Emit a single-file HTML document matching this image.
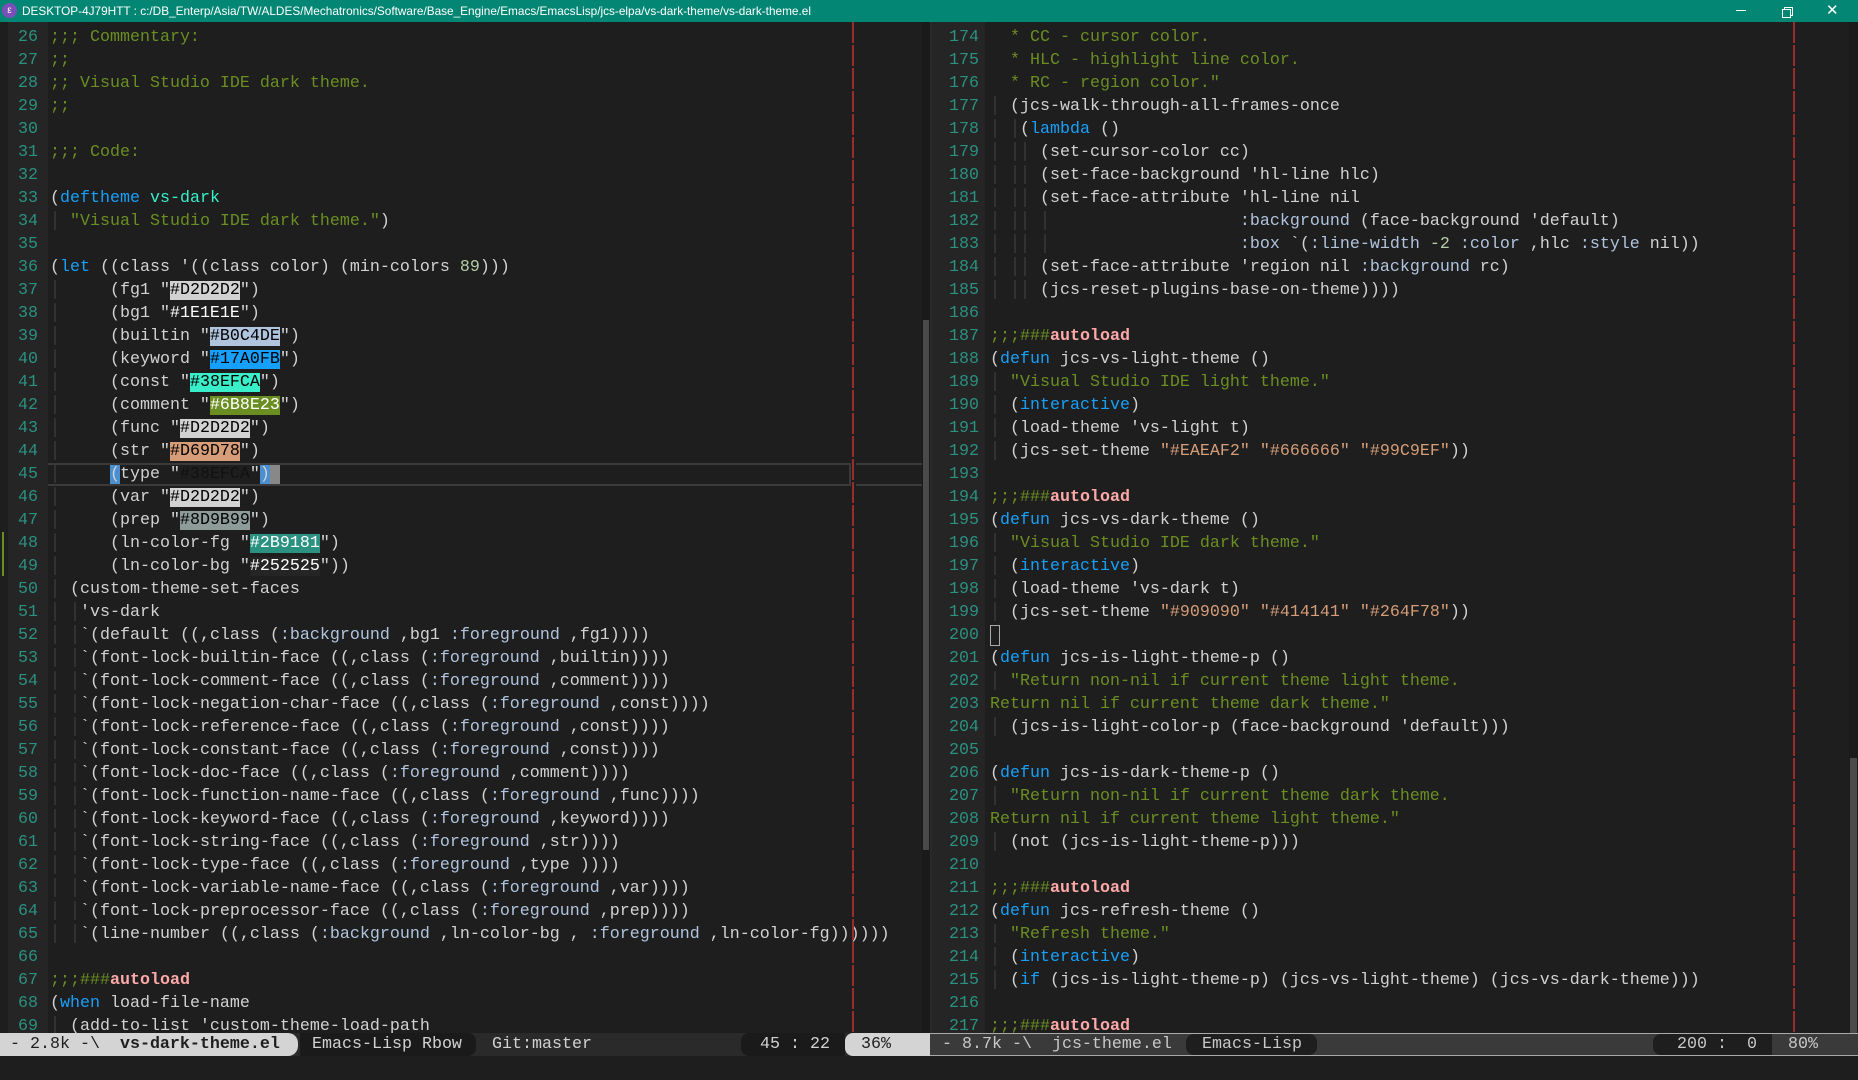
<!DOCTYPE html>
<html><head><meta charset="utf-8">
<style>
*{margin:0;padding:0;box-sizing:border-box}
html,body{width:1858px;height:1080px;overflow:hidden;background:#1e1e1e}
body{position:relative;font-family:"Liberation Mono","DejaVu Sans Mono",monospace;font-size:16.667px;color:#d2d2d2}
#title{position:absolute;left:0;top:0;width:1858px;height:22px;background:#038774;color:#fff;font-family:"Liberation Sans",sans-serif;font-size:11.8px;line-height:22px;padding-left:22px;white-space:nowrap}
#icon{position:absolute;left:2px;top:3px;width:15px;height:15px;border-radius:50%;background:#7b4fb8;color:#fff;font-size:10px;line-height:15px;text-align:center}
.wb{position:absolute;top:0;height:22px;color:#fff}
.pane{position:absolute;top:26px;overflow:hidden;height:1007px}
.l{height:23px;line-height:23px;white-space:pre}
.gut{position:absolute;top:22px;height:1011px;background:#252525}
.num{color:#2b9181;text-align:right}
.c{color:#6b8e23}.k{color:#17a0fb}.s{color:#d69d78}.b{color:#b0c4de}.n{color:#b5cea8}.f{color:#38efca}
.a{color:#ffa8a8;font-weight:bold}.g{color:#404040}
.fill{position:absolute;top:22px;width:2px;height:1011px;background:repeating-linear-gradient(#9a2c2c 0 21px,transparent 21px 23px)}
.sb{position:absolute;top:22px;height:1011px;background:#1a1a1a}
.th{position:absolute;background:#4a4a4a}
.ml{position:absolute;top:1033px;height:23px;line-height:23px;white-space:pre;font-size:16.667px}
.seg{position:absolute;top:0;height:23px;padding-left:0}
</style></head><body>
<div id="title"><div id="icon">ε</div>DESKTOP-4J79HTT : c:/DB_Enterp/Asia/TW/ALDES/Mechatronics/Software/Base_Engine/Emacs/EmacsLisp/jcs-elpa/vs-dark-theme/vs-dark-theme.el
<div class="wb" style="left:1736px;top:10px;width:10px;height:1px;background:#fff"></div>
<div class="wb" style="left:1784px;top:7px;width:9px;height:9px;border:1px solid #fff"></div>
<div class="wb" style="left:1782px;top:9px;width:9px;height:9px;border:1px solid #fff;background:#038774"></div>
<div class="wb" style="left:1826px;top:0;line-height:22px;font-size:15px">✕</div>
</div>

<div class="gut" style="left:8px;width:40px"></div>
<div style="position:absolute;left:2px;top:532px;width:2px;height:44px;background:#6b8e23"></div>
<div class="pane" style="left:8px;width:30px">
<div class="num">
<div class="l">26</div><div class="l">27</div><div class="l">28</div><div class="l">29</div><div class="l">30</div><div class="l">31</div><div class="l">32</div><div class="l">33</div><div class="l">34</div><div class="l">35</div><div class="l">36</div><div class="l">37</div><div class="l">38</div><div class="l">39</div><div class="l">40</div><div class="l">41</div><div class="l">42</div><div class="l">43</div><div class="l">44</div><div class="l">45</div><div class="l">46</div><div class="l">47</div><div class="l">48</div><div class="l">49</div><div class="l">50</div><div class="l">51</div><div class="l">52</div><div class="l">53</div><div class="l">54</div><div class="l">55</div><div class="l">56</div><div class="l">57</div><div class="l">58</div><div class="l">59</div><div class="l">60</div><div class="l">61</div><div class="l">62</div><div class="l">63</div><div class="l">64</div><div class="l">65</div><div class="l">66</div><div class="l">67</div><div class="l">68</div><div class="l">69</div>
</div></div>

<div style="position:absolute;left:48px;top:463px;width:803px;height:23px;border:2px solid #3a3a3a;border-left:none"></div>
<div style="position:absolute;left:856px;top:463px;width:66px;height:23px;border:2px solid #3a3a3a;border-left:none;border-right:none"></div>
<div style="position:absolute;left:110px;top:465px;width:10px;height:19px;background:#4a8fd0"></div>
<div style="position:absolute;left:260px;top:465px;width:10px;height:19px;background:#4a8fd0"></div>
<div style="position:absolute;left:270px;top:465px;width:10px;height:19px;background:#888"></div>

<div class="pane" style="left:50px;width:872px">
<div class="l c">;;; Commentary:</div>
<div class="l c">;;</div>
<div class="l c">;; Visual Studio IDE dark theme.</div>
<div class="l c">;;</div>
<div class="l"> </div>
<div class="l c">;;; Code:</div>
<div class="l"> </div>
<div class="l">(<span class="k">deftheme</span> <span class="f">vs-dark</span></div>
<div class="l"><span class="g">│</span> <span class="c">"Visual Studio IDE dark theme."</span>)</div>
<div class="l"> </div>
<div class="l">(<span class="k">let</span> ((class '((class color) (min-colors <span class="n">89</span>)))</div>
<div class="l"><span class="g">│</span>     (fg1 "<span style="background:#d2d2d2;color:#000">#D2D2D2</span>")</div>
<div class="l"><span class="g">│</span>     (bg1 "<span style="background:#1e1e1e;color:#fff">#1E1E1E</span>")</div>
<div class="l"><span class="g">│</span>     (builtin "<span style="background:#b0c4de;color:#000">#B0C4DE</span>")</div>
<div class="l"><span class="g">│</span>     (keyword "<span style="background:#17a0fb;color:#000">#17A0FB</span>")</div>
<div class="l"><span class="g">│</span>     (const "<span style="background:#38efca;color:#000">#38EFCA</span>")</div>
<div class="l"><span class="g">│</span>     (comment "<span style="background:#6b8e23;color:#fff">#6B8E23</span>")</div>
<div class="l"><span class="g">│</span>     (func "<span style="background:#d2d2d2;color:#000">#D2D2D2</span>")</div>
<div class="l"><span class="g">│</span>     (str "<span style="background:#d69d78;color:#000">#D69D78</span>")</div>
<div class="l"><span class="g">│</span>     (type "<span style="color:#111">#38EFCA</span>")</div>
<div class="l"><span class="g">│</span>     (var "<span style="background:#d2d2d2;color:#000">#D2D2D2</span>")</div>
<div class="l"><span class="g">│</span>     (prep "<span style="background:#8d9b99;color:#000">#8D9B99</span>")</div>
<div class="l"><span class="g">│</span>     (ln-color-fg "<span style="background:#2b9181;color:#fff">#2B9181</span>")</div>
<div class="l"><span class="g">│</span>     (ln-color-bg "<span style="background:#252525;color:#fff">#252525</span>"))</div>
<div class="l"><span class="g">│</span> (custom-theme-set-faces</div>
<div class="l"><span class="g">│</span> <span class="g">│</span>'vs-dark</div>
<div class="l"><span class="g">│</span> <span class="g">│</span>`(default ((,class (<span class="b">:background</span> ,bg1 <span class="b">:foreground</span> ,fg1))))</div>
<div class="l"><span class="g">│</span> <span class="g">│</span>`(font-lock-builtin-face ((,class (<span class="b">:foreground</span> ,builtin))))</div>
<div class="l"><span class="g">│</span> <span class="g">│</span>`(font-lock-comment-face ((,class (<span class="b">:foreground</span> ,comment))))</div>
<div class="l"><span class="g">│</span> <span class="g">│</span>`(font-lock-negation-char-face ((,class (<span class="b">:foreground</span> ,const))))</div>
<div class="l"><span class="g">│</span> <span class="g">│</span>`(font-lock-reference-face ((,class (<span class="b">:foreground</span> ,const))))</div>
<div class="l"><span class="g">│</span> <span class="g">│</span>`(font-lock-constant-face ((,class (<span class="b">:foreground</span> ,const))))</div>
<div class="l"><span class="g">│</span> <span class="g">│</span>`(font-lock-doc-face ((,class (<span class="b">:foreground</span> ,comment))))</div>
<div class="l"><span class="g">│</span> <span class="g">│</span>`(font-lock-function-name-face ((,class (<span class="b">:foreground</span> ,func))))</div>
<div class="l"><span class="g">│</span> <span class="g">│</span>`(font-lock-keyword-face ((,class (<span class="b">:foreground</span> ,keyword))))</div>
<div class="l"><span class="g">│</span> <span class="g">│</span>`(font-lock-string-face ((,class (<span class="b">:foreground</span> ,str))))</div>
<div class="l"><span class="g">│</span> <span class="g">│</span>`(font-lock-type-face ((,class (<span class="b">:foreground</span> ,type ))))</div>
<div class="l"><span class="g">│</span> <span class="g">│</span>`(font-lock-variable-name-face ((,class (<span class="b">:foreground</span> ,var))))</div>
<div class="l"><span class="g">│</span> <span class="g">│</span>`(font-lock-preprocessor-face ((,class (<span class="b">:foreground</span> ,prep))))</div>
<div class="l"><span class="g">│</span> <span class="g">│</span>`(line-number ((,class (<span class="b">:background</span> ,ln-color-bg , <span class="b">:foreground</span> ,ln-color-fg))))))</div>
<div class="l"> </div>
<div class="l"><span class="c">;;;###</span><span class="a">autoload</span></div>
<div class="l">(<span class="k">when</span> load-file-name</div>
<div class="l"><span class="g">│</span> (add-to-list 'custom-theme-load-path</div>
</div>
<div class="fill" style="left:852px"></div>
<div class="sb" style="left:922px;width:8px"><div class="th" style="left:1px;top:298px;width:6px;height:530px"></div></div>

<div class="gut" style="left:932px;width:53px"></div>
<div class="pane" style="left:932px;width:47px">
<div class="num">
<div class="l">174</div><div class="l">175</div><div class="l">176</div><div class="l">177</div><div class="l">178</div><div class="l">179</div><div class="l">180</div><div class="l">181</div><div class="l">182</div><div class="l">183</div><div class="l">184</div><div class="l">185</div><div class="l">186</div><div class="l">187</div><div class="l">188</div><div class="l">189</div><div class="l">190</div><div class="l">191</div><div class="l">192</div><div class="l">193</div><div class="l">194</div><div class="l">195</div><div class="l">196</div><div class="l">197</div><div class="l">198</div><div class="l">199</div><div class="l">200</div><div class="l">201</div><div class="l">202</div><div class="l">203</div><div class="l">204</div><div class="l">205</div><div class="l">206</div><div class="l">207</div><div class="l">208</div><div class="l">209</div><div class="l">210</div><div class="l">211</div><div class="l">212</div><div class="l">213</div><div class="l">214</div><div class="l">215</div><div class="l">216</div><div class="l">217</div>
</div></div>
<div style="position:absolute;left:990px;top:625px;width:10px;height:21px;border:1px solid #aaa"></div>
<div class="pane" style="left:990px;width:859px">
<div class="l c">  * CC - cursor color.</div>
<div class="l c">  * HLC - highlight line color.</div>
<div class="l c">  * RC - region color."</div>
<div class="l"><span class="g">│</span> (jcs-walk-through-all-frames-once</div>
<div class="l"><span class="g">│</span> <span class="g">│</span>(<span class="k">lambda</span> ()</div>
<div class="l"><span class="g">│</span> <span class="g">││</span> (set-cursor-color cc)</div>
<div class="l"><span class="g">│</span> <span class="g">││</span> (set-face-background 'hl-line hlc)</div>
<div class="l"><span class="g">│</span> <span class="g">││</span> (set-face-attribute 'hl-line nil</div>
<div class="l"><span class="g">│</span> <span class="g">││</span> <span class="g">│</span>                   <span class="b">:background</span> (face-background 'default)</div>
<div class="l"><span class="g">│</span> <span class="g">││</span> <span class="g">│</span>                   <span class="b">:box</span> `(<span class="b">:line-width</span> <span class="n">-2</span> <span class="b">:color</span> ,hlc <span class="b">:style</span> nil))</div>
<div class="l"><span class="g">│</span> <span class="g">││</span> (set-face-attribute 'region nil <span class="b">:background</span> rc)</div>
<div class="l"><span class="g">│</span> <span class="g">││</span> (jcs-reset-plugins-base-on-theme))))</div>
<div class="l"> </div>
<div class="l"><span class="c">;;;###</span><span class="a">autoload</span></div>
<div class="l">(<span class="k">defun</span> jcs-vs-light-theme ()</div>
<div class="l"><span class="g">│</span> <span class="c">"Visual Studio IDE light theme."</span></div>
<div class="l"><span class="g">│</span> (<span class="k">interactive</span>)</div>
<div class="l"><span class="g">│</span> (load-theme 'vs-light t)</div>
<div class="l"><span class="g">│</span> (jcs-set-theme <span class="s">"#EAEAF2"</span> <span class="s">"#666666"</span> <span class="s">"#99C9EF"</span>))</div>
<div class="l"> </div>
<div class="l"><span class="c">;;;###</span><span class="a">autoload</span></div>
<div class="l">(<span class="k">defun</span> jcs-vs-dark-theme ()</div>
<div class="l"><span class="g">│</span> <span class="c">"Visual Studio IDE dark theme."</span></div>
<div class="l"><span class="g">│</span> (<span class="k">interactive</span>)</div>
<div class="l"><span class="g">│</span> (load-theme 'vs-dark t)</div>
<div class="l"><span class="g">│</span> (jcs-set-theme <span class="s">"#909090"</span> <span class="s">"#414141"</span> <span class="s">"#264F78"</span>))</div>
<div class="l"> </div>
<div class="l">(<span class="k">defun</span> jcs-is-light-theme-p ()</div>
<div class="l"><span class="g">│</span> <span class="c">"Return non-nil if current theme light theme.</span></div>
<div class="l c">Return nil if current theme dark theme."</div>
<div class="l"><span class="g">│</span> (jcs-is-light-color-p (face-background 'default)))</div>
<div class="l"> </div>
<div class="l">(<span class="k">defun</span> jcs-is-dark-theme-p ()</div>
<div class="l"><span class="g">│</span> <span class="c">"Return non-nil if current theme dark theme.</span></div>
<div class="l c">Return nil if current theme light theme."</div>
<div class="l"><span class="g">│</span> (not (jcs-is-light-theme-p)))</div>
<div class="l"> </div>
<div class="l"><span class="c">;;;###</span><span class="a">autoload</span></div>
<div class="l">(<span class="k">defun</span> jcs-refresh-theme ()</div>
<div class="l"><span class="g">│</span> <span class="c">"Refresh theme."</span></div>
<div class="l"><span class="g">│</span> (<span class="k">interactive</span>)</div>
<div class="l"><span class="g">│</span> (<span class="k">if</span> (jcs-is-light-theme-p) (jcs-vs-light-theme) (jcs-vs-dark-theme)))</div>
<div class="l"> </div>
<div class="l"><span class="c">;;;###</span><span class="a">autoload</span></div>
</div>
<div class="fill" style="left:1793px"></div>
<div style="position:absolute;left:930px;top:22px;width:2px;height:1011px;background:#2a2a2a"></div>
<div class="sb" style="left:1849px;width:9px"><div class="th" style="left:1px;top:736px;width:7px;height:275px"></div></div>

<div class="ml" style="left:0;width:930px;background:#2a2a2a">
<div class="seg" style="left:0;width:298px;background:#d4d4d4;color:#1e1e1e;border-radius:0 10px 10px 0"> - 2.8k -\  <b>vs-dark-theme.el</b></div>
<div class="seg" style="left:300px;width:176px;background:#1a1a1a;color:#d2d2d2;padding-left:12px;border-radius:0 8px 8px 0">Emacs-Lisp Rbow</div>
<div class="seg" style="left:492px;color:#d2d2d2">Git:master</div>
<div class="seg" style="left:741px;width:104px;background:#1a1a1a;color:#d2d2d2;padding-left:19px;border-radius:8px 0 0 8px">45 : 22</div>
<div class="seg" style="left:845px;width:85px;background:#d4d4d4;color:#1e1e1e;padding-left:16px;border-radius:8px 0 0 8px">36%</div>
</div>
<div class="ml" style="left:930px;width:928px;background:#3a3a3a;border-top:1px solid #aaa;border-bottom:1px solid #aaa;line-height:21px">
<div class="seg" style="left:12px;color:#c8c8c8;height:21px">- 8.7k -\  jcs-theme.el</div>
<div class="seg" style="left:256px;width:131px;height:21px;background:#1e1e1e;color:#c8c8c8;padding-left:16px;border-radius:8px">Emacs-Lisp</div>
<div class="seg" style="left:723px;width:119px;height:21px;background:#1e1e1e;color:#c8c8c8;padding-left:24px;border-radius:8px 0 0 8px">200 :  0</div>
<div class="seg" style="left:858px;color:#c8c8c8;height:21px">80%</div>
</div>
</body></html>
